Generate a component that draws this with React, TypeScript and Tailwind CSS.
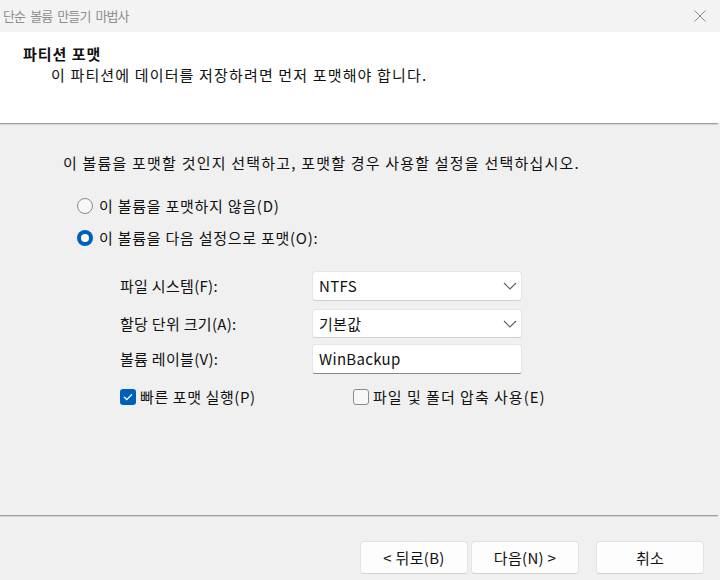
import React from "react";

const Chevron = () => (
  <svg width="14" height="8" viewBox="0 0 14 8" className="shrink-0">
    <path d="M1 1 L7 7 L13 1" fill="none" stroke="#5f5f5f" strokeWidth="1.1" />
  </svg>
);

const Radio = ({ checked }: { checked: boolean }) =>
  checked ? (
    <span className="w-[16px] h-[16px] rounded-full bg-[#005fb8] flex items-center justify-center shrink-0">
      <span className="w-[8px] h-[8px] rounded-full bg-white" />
    </span>
  ) : (
    <span className="w-[16px] h-[16px] rounded-full border border-[#8a8a8a] bg-[#f7f7f7] shrink-0" />
  );

const Check = ({ checked }: { checked: boolean }) =>
  checked ? (
    <span className="w-[16px] h-[16px] rounded-[3px] bg-[#005fb8] flex items-center justify-center shrink-0">
      <svg width="10" height="8" viewBox="0 0 10 8">
        <path d="M1 4 L3.8 6.6 L9 1.2" fill="none" stroke="white" strokeWidth="1.3" />
      </svg>
    </span>
  ) : (
    <span className="w-[16px] h-[16px] rounded-[3px] border border-[#8a8a8a] bg-[#f7f7f7] shrink-0" />
  );

const Select = ({ value, h }: { value: string; h: string }) => (
  <div className={`w-[210px] ${h} bg-white border border-[#e5e5e5] border-b-[#d0d0d0] rounded-[4px] flex items-center justify-between pl-[6px] pr-[4px]`}>
    <span className="tracking-[0.3px]">{value}</span>
    <Chevron />
  </div>
);

const Button = ({ children }: { children: React.ReactNode }) => (
  <div className="w-[108px] h-[33px] bg-[#fdfdfd] border border-[#e2e2e2] border-b-[#d2d2d2] rounded-[4px] flex items-center justify-center tracking-[0.3px]">
    {children}
  </div>
);

export default function App() {
  return (
    <div className="w-[720px] h-[580px] flex flex-col bg-[#f0f0f0] text-[15px] leading-[20px] text-[#111] font-['Noto_Sans_CJK_KR',sans-serif] overflow-hidden">
      {/* Title bar */}
      <div className="h-[32px] bg-[#f3f3f3] flex items-center justify-between pl-[3px] pr-[14px] shrink-0">
        <span className="text-[13px] text-[#8e8e8e] tracking-[-0.9px] [word-spacing:3px]">단순 볼륨 만들기 마법사</span>
        <svg width="12" height="12" viewBox="0 0 12 12">
          <path d="M0.5 0.5 L11.5 11.5 M11.5 0.5 L0.5 11.5" stroke="#8a8a8a" strokeWidth="1" />
        </svg>
      </div>
      {/* Header */}
      <div className="h-[91px] bg-white pt-[11px] pl-[23px] shrink-0 flex flex-col">
        <div className="font-bold leading-[21px] tracking-[1px]">파티션 포맷</div>
        <div className="pl-[28px] leading-[21px] tracking-[1.15px]">이 파티션에 데이터를 저장하려면 먼저 포맷해야 합니다.</div>
      </div>
      <div className="h-[1px] bg-[#a0a0a0] mr-[2px] shrink-0" />
      <div className="h-[1px] bg-[#d4d4d4] mr-[2px] shrink-0" />
      {/* Body */}
      <div className="flex-1 flex flex-col pl-[63px] pt-[28px]">
        <div className="tracking-[1.2px]">이 볼륨을 포맷할 것인지 선택하고, 포맷할 경우 사용할 설정을 선택하십시오.</div>
        <div className="flex flex-col pl-[14px] mt-[23px] gap-[12px] tracking-[0.75px]">
          <div className="flex items-center gap-[6px]">
            <Radio checked={false} />
            <span>이 볼륨을 포맷하지 않음(D)</span>
          </div>
          <div className="flex items-center gap-[6px]">
            <Radio checked={true} />
            <span>이 볼륨을 다음 설정으로 포맷(O):</span>
          </div>
        </div>
        <div className="pl-[57px] mt-[23px] flex flex-col">
          <div className="flex items-center">
            <span className="w-[192px] tracking-[0.3px]">파일 시스템(F):</span>
            <Select value="NTFS" h="h-[30px]" />
          </div>
          <div className="flex items-center mt-[8px]">
            <span className="w-[192px] tracking-[0.3px]">할당 단위 크기(A):</span>
            <Select value="기본값" h="h-[29px]" />
          </div>
          <div className="flex items-center mt-[6px]">
            <span className="w-[192px] tracking-[0.3px]">볼륨 레이블(V):</span>
            <div className="w-[210px] h-[30px] bg-white border border-[#e5e5e5] border-b-[#8a8a8a] rounded-[3px] flex items-center pl-[6px] tracking-[0.3px]">
              WinBackup
            </div>
          </div>
          <div className="flex items-center mt-[13px]">
            <div className="w-[233px] flex items-center gap-[4px]">
              <Check checked={true} />
              <span className="tracking-[0.6px]">빠른 포맷 실행(P)</span>
            </div>
            <div className="flex items-center gap-[4px]">
              <Check checked={false} />
              <span className="tracking-[1px]">파일 및 폴더 압축 사용(E)</span>
            </div>
          </div>
        </div>
      </div>
      {/* Bottom separator */}
      <div className="h-[1px] bg-[#a0a0a0] mr-[2px] shrink-0" />
      <div className="h-[1px] bg-[#d4d4d4] mr-[2px] shrink-0" />
      {/* Footer */}
      <div className="h-[63px] shrink-0 flex items-start justify-end pt-[24px] pr-[16px]">
        <div className="flex gap-[3px]">
          <Button>&lt; 뒤로(B)</Button>
          <Button>다음(N) &gt;</Button>
        </div>
        <div className="ml-[17px]">
          <Button>취소</Button>
        </div>
      </div>
    </div>
  );
}
